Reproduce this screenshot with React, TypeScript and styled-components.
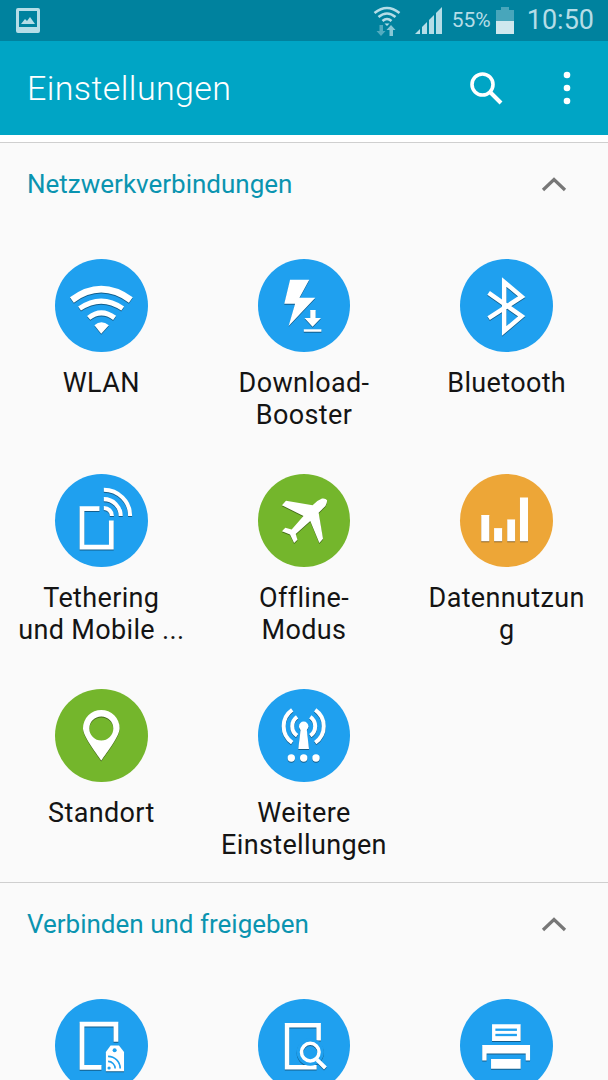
import React from 'react';
import styled, { createGlobalStyle } from 'styled-components';

const GlobalStyle = createGlobalStyle`
  html, body {
    margin: 0;
    padding: 0;
    background: #fafafa;
    font-family: Roboto, "Liberation Sans", sans-serif;
  }
`;

const Page = styled.div`
  width: 608px;
  height: 1080px;
  overflow: hidden;
  background: #fafafa;
`;

const StatusBar = styled.div`
  display: flex;
  align-items: center;
  height: 41px;
  padding: 0 14px 0 16px;
  background: #00829e;
  color: #b5dde7;
`;

const StatusRight = styled.div`
  display: flex;
  align-items: center;
  margin-left: auto;
`;

const StatusText = styled.span<{ $size: number; $left: number }>`
  font-size: ${props => props.$size}px;
  margin-left: ${props => props.$left}px;
  line-height: 41px;
`;

const StatusIcon = styled.svg<{ $left?: number }>`
  display: block;
  margin-left: ${props => props.$left || 0}px;
`;

const AppBar = styled.header`
  display: flex;
  align-items: center;
  height: 94px;
  padding: 0 36px 0 27px;
  background: #00a5c5;
  color: #fff;
`;

const Title = styled.h1`
  margin: 0;
  font-size: 34px;
  font-weight: 300;
  letter-spacing: 0.4px;
`;

const AppActions = styled.div`
  display: flex;
  align-items: center;
  gap: 59px;
  margin-left: auto;
`;

const TopStrip = styled.div`
  height: 7px;
  background: #fff;
`;

const Section = styled.section`
  border-top: 1px solid #cfcfcf;
  padding-bottom: 21px;
`;

const SectionHeader = styled.div`
  display: flex;
  align-items: center;
  justify-content: space-between;
  height: 82px;
  padding: 0 41px 0 27px;
`;

const SectionTitle = styled.h2`
  margin: 0;
  font-size: 26px;
  font-weight: 400;
  color: #0a94b0;
`;

const TileGrid = styled.div`
  display: grid;
  grid-template-columns: repeat(3, 1fr);
  row-gap: 43px;
  padding-top: 34px;
`;

const Tile = styled.div`
  display: flex;
  flex-direction: column;
  align-items: center;
`;

const Badge = styled.div<{ $color: string }>`
  width: 92.5px;
  height: 93px;
  border-radius: 50%;
  background: ${props => props.$color};
`;

const BadgeIcon = styled.svg`
  display: block;
  width: 92.5px;
  height: 93px;
  filter: drop-shadow(0.8px 1.2px 0.4px rgba(0, 0, 0, 0.42));
`;

const TileLabel = styled.div`
  width: 168px;
  margin-top: 16px;
  font-size: 27px;
  letter-spacing: 0.35px;
  line-height: 31.5px;
  text-align: center;
  color: #141414;
  white-space: pre-line;
  overflow-wrap: anywhere;
`;

const BLUE = '#1fa0ef';
const GREEN = '#74b62c';
const ORANGE = '#eda637';

const Chevron = () => (
  <svg width="26" height="16" viewBox="0 0 26 16">
    <path d="M2 14 L13 3.5 L24 14" fill="none" stroke="#777" strokeWidth="3.2" />
  </svg>
);

const WlanIcon = () => (
  <g>
    <path d="M16.7 40.3 Q45.7 19 75 40.3" fill="none" stroke="#fff" strokeWidth="6.5" />
    <path d="M24.3 48.7 Q45.7 34 67 48.7" fill="none" stroke="#fff" strokeWidth="5" />
    <path d="M33.3 58 Q45.7 48 59 58" fill="none" stroke="#fff" strokeWidth="5" />
    <path d="M39 65.3 Q45.7 59.5 53.3 65.3 L45.7 73.7 Z" fill="#fff" />
  </g>
);

const BoosterIcon = () => (
  <g fill="#fff">
    <path d="M31.7 20.3 H50.7 L41 38 H56.7 L30.3 66 L36.7 44 H26 Z" />
    <path d="M51.7 50.3 H57 V58 H62.3 L54 66.7 L46 58 H51.7 Z" />
    <rect x="45.3" y="69.3" width="17.4" height="2.4" />
  </g>
);

const BluetoothIcon = () => (
  <path
    d="M28.3 33.3 L61 56.3 L43.7 71 V22.5 L61 37 L28.3 58.3"
    fill="none"
    stroke="#fff"
    strokeWidth="4.4"
  />
);

const TetheringIcon = () => (
  <g fill="none" stroke="#fff">
    <path d="M44 34 H26.7 V72 H55.7 V45.7" strokeWidth="4.7" />
    <path d="M48.3 15.3 A26 26 0 0 1 74.3 41.3" strokeWidth="4" />
    <path d="M48.3 24.6 A16.7 16.7 0 0 1 65 41.3" strokeWidth="4" />
    <path d="M48.3 33.3 A8 8 0 0 1 56.3 41.3" strokeWidth="4" />
  </g>
);

const PlaneIcon = () => (
  <path
    fill="#fff"
    d="M63.3 24 Q67 23.5 68.3 25.7 Q68.5 28.5 66.7 31.3 L60 38 L64.3 63.7 L60.7 68 L51.7 46.3 L37.3 59 L39 64.7 L35.7 68 L31.7 59.7 L23.7 56.3 L27 53 L33.3 54.7 L45 41.3 L23.7 30.7 L27.7 26.3 L54 30.7 Q58 26 63.3 24 Z"
  />
);

const BarsIcon = () => (
  <g fill="#fff">
    <rect x="21" y="40.3" width="8" height="26" />
    <rect x="33.7" y="53.3" width="8" height="13" />
    <rect x="46.7" y="44.7" width="7.8" height="21.6" />
    <rect x="59.3" y="23" width="8" height="43.3" />
  </g>
);

const PinIcon = () => (
  <path
    fill="#fff"
    fillRule="evenodd"
    d="M46.3 20.7 A18.3 18.3 0 0 1 64.6 39 C64.6 47 52 63 46.3 71.3 C40.6 63 28 47 28 39 A18.3 18.3 0 0 1 46.3 20.7 Z M46.3 27.3 A12 12 0 1 0 46.3 51.3 A12 12 0 1 0 46.3 27.3 Z"
  />
);

const AntennaIcon = () => (
  <g>
    <g fill="#fff">
      <circle cx="45.7" cy="37" r="4.7" />
      <path d="M42.7 39.7 H48.7 L51 59.7 H40.3 Z" />
      <circle cx="33.3" cy="68.7" r="3.7" />
      <circle cx="45.7" cy="68.7" r="3.7" />
      <circle cx="58" cy="68.7" r="3.7" />
    </g>
    <g fill="none" stroke="#fff" strokeWidth="4">
      <path d="M34.2 20.6 A20 20 0 0 0 34.2 53.4" />
      <path d="M57.2 20.6 A20 20 0 0 1 57.2 53.4" />
      <path d="M39.1 27.6 A11.5 11.5 0 0 0 39.1 46.4" />
      <path d="M52.3 27.6 A11.5 11.5 0 0 1 52.3 46.4" />
    </g>
  </g>
);

const TagIcon = () => (
  <g>
    <path d="M60.3 42 V24.7 H26.7 V67.3 H46" fill="none" stroke="#fff" strokeWidth="4.7" />
    <path d="M55 45.7 H63.3 L68.3 52.3 V71.3 H50.3 V52.3 Z" fill="#fff" />
    <circle cx="59" cy="50.5" r="2" fill={BLUE} />
    <circle cx="53.5" cy="68" r="1.6" fill={BLUE} />
    <path d="M52.5 61.5 A7 7 0 0 1 59.5 68.5" fill="none" stroke={BLUE} strokeWidth="1.6" />
    <path d="M52.5 56.5 A12 12 0 0 1 64.5 68.5" fill="none" stroke={BLUE} strokeWidth="1.6" />
  </g>
);

const FindIcon = () => (
  <g fill="none" stroke="#fff">
    <path d="M60 40.7 V25.7 H28.7 V67.3 H58" strokeWidth="4.4" />
    <circle cx="51.7" cy="52.3" r="11" stroke={BLUE} strokeWidth="5" />
    <circle cx="51.7" cy="52.3" r="8.7" strokeWidth="3.5" />
    <path d="M58.3 59.7 L66.7 68" strokeWidth="4" />
  </g>
);

const PrinterIcon = () => (
  <g>
    <path
      fill="#fff"
      d="M31.7 24.7 H60 V41.3 H31.7 Z M22 45.3 H69.3 V60.7 H65 V53.7 H26.3 V60.7 H22 Z M30.7 59 H60 V68.7 H30.7 Z"
    />
    <rect x="35" y="29" width="21.3" height="2.3" fill={BLUE} />
    <rect x="35" y="34.2" width="21.3" height="2.3" fill={BLUE} />
  </g>
);

interface TileItem {
  color: string;
  icon: React.ReactNode;
  label?: string;
  box?: number;
}

const networkTiles: TileItem[] = [
  { color: BLUE, icon: <WlanIcon />, label: 'WLAN' },
  { color: BLUE, icon: <BoosterIcon />, label: 'Download-\nBooster' },
  { color: BLUE, icon: <BluetoothIcon />, label: 'Bluetooth' },
  { color: BLUE, icon: <TetheringIcon />, label: 'Tethering\nund Mobile ...' },
  { color: GREEN, icon: <PlaneIcon />, label: 'Offline-\nModus' },
  { color: ORANGE, icon: <BarsIcon />, label: 'Datennutzung' },
  { color: GREEN, icon: <PinIcon />, label: 'Standort', box: 92.5 },
  { color: BLUE, icon: <AntennaIcon />, label: 'Weitere\nEinstellungen', box: 92.5 },
];

const shareTiles: TileItem[] = [
  { color: BLUE, icon: <TagIcon /> },
  { color: BLUE, icon: <FindIcon /> },
  { color: BLUE, icon: <PrinterIcon /> },
];

const SettingsSection: React.FC<{ title: string; tiles: TileItem[] }> = ({ title, tiles }) => (
  <Section>
    <SectionHeader>
      <SectionTitle>{title}</SectionTitle>
      <Chevron />
    </SectionHeader>
    <TileGrid>
      {tiles.map((tile, i) => (
        <Tile key={i}>
          <Badge $color={tile.color}>
            <BadgeIcon viewBox={`0 0 ${tile.box || 91.5} ${tile.box || 91.5}`}>{tile.icon}</BadgeIcon>
          </Badge>
          {tile.label && <TileLabel>{tile.label}</TileLabel>}
        </Tile>
      ))}
    </TileGrid>
  </Section>
);

const App: React.FC = () => (
  <Page>
    <GlobalStyle />
    <StatusBar>
      <StatusIcon width="24" height="25" viewBox="0 0 24 25">
        <path
          fill="#b5dde7"
          fillRule="evenodd"
          d="M2 0 H22 Q24 0 24 2 V23 Q24 25 22 25 H2 Q0 25 0 23 V2 Q0 0 2 0 Z M3 3 V19 H21 V3 Z"
        />
        <path fill="#b5dde7" d="M5 16 L9 11 L11 13 L14 9 L19 16 Z" />
        <rect x="3" y="19" width="18" height="3" fill="#b5dde7" opacity="0.55" />
      </StatusIcon>
      <StatusRight>
        <StatusIcon width="28" height="31" viewBox="0 0 28 31">
          <g fill="none" stroke="#b5dde7" strokeWidth="2.6">
            <path d="M1.5 8 Q14 -2 26.5 8" />
            <path d="M5.5 12 Q14 5 22.5 12" />
            <path d="M9.5 16 Q14 12 18.5 16" />
          </g>
          <path fill="#b5dde7" d="M11.5 18.5 H16.5 L14 21 Z" />
          <path fill="#b5dde7" opacity="0.75" d="M18 20 L22.5 25 H20 V31 H16.5 V25 H13.5 Z" />
          <path fill="#b5dde7" opacity="0.45" d="M8 31 L3.5 26 H6.5 V20 H10 V26 H12.5 Z" />
        </StatusIcon>
        <StatusIcon $left={14} width="27" height="27" viewBox="0 0 27 27">
          <g fill="#b5dde7">
            <path d="M0 27 L5 22 V27 Z" />
            <path d="M7 20 L12 15 V27 H7 Z" />
            <path d="M14 13 L19 8 V27 H14 Z" />
            <path d="M21 6 L27 0 V27 H21 Z" />
          </g>
        </StatusIcon>
        <StatusText $size={21} $left={10}>55%</StatusText>
        <StatusIcon $left={5} width="18" height="27" viewBox="0 0 18 27">
          <path fill="#b5dde7" opacity="0.4" d="M5 0 H13 V3 H18 V14 H0 V3 H5 Z" />
          <rect y="14" width="18" height="13" fill="#cfe8ee" />
        </StatusIcon>
        <StatusText $size={27} $left={13}>10:50</StatusText>
      </StatusRight>
    </StatusBar>
    <AppBar>
      <Title>Einstellungen</Title>
      <AppActions>
        <svg width="34" height="34" viewBox="0 0 34 34">
          <circle cx="13.5" cy="13.5" r="10.5" fill="none" stroke="#fff" strokeWidth="3.6" />
          <path d="M21 21 L32 32" stroke="#fff" strokeWidth="4" />
        </svg>
        <svg width="10" height="34" viewBox="0 0 10 34">
          <circle cx="5" cy="4" r="3.3" fill="#fff" />
          <circle cx="5" cy="17" r="3.3" fill="#fff" />
          <circle cx="5" cy="30" r="3.3" fill="#fff" />
        </svg>
      </AppActions>
    </AppBar>
    <TopStrip />
    <SettingsSection title="Netzwerkverbindungen" tiles={networkTiles} />
    <SettingsSection title="Verbinden und freigeben" tiles={shareTiles} />
  </Page>
);

export default App;
